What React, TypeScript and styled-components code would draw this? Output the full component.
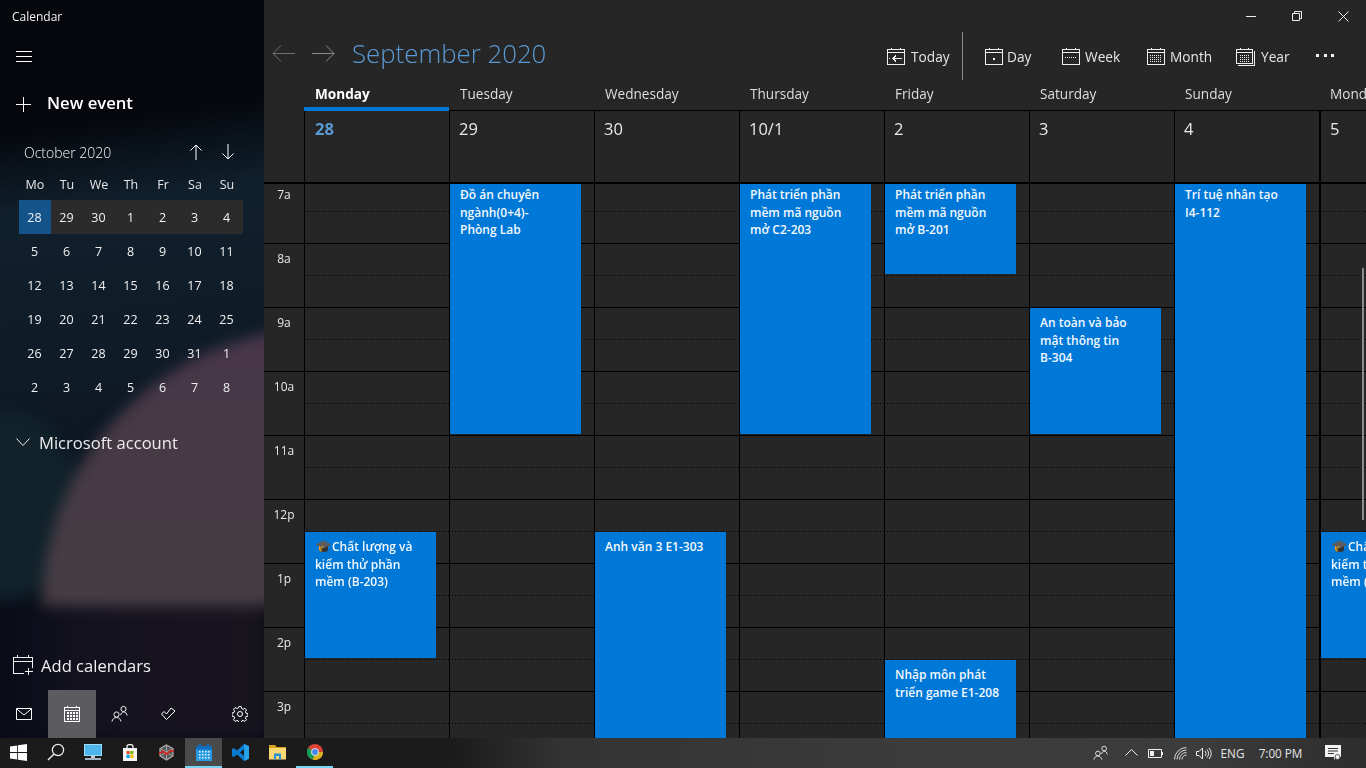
import React from "react";
import styled, { createGlobalStyle } from "styled-components";

const GlobalStyle = createGlobalStyle`
  html, body {
    margin: 0;
    padding: 0;
    background: #262626;
  }
  body {
    font-family: "Open Sans", "Noto Sans", sans-serif;
    overflow: hidden;
  }
`;

const Screen = styled.div`
  width: 1366px;
  height: 768px;
  display: flex;
  flex-direction: column;
  overflow: hidden;
  color: #fff;
`;

const AppWindow = styled.div`
  display: flex;
  height: 738px;
`;

/* ---------- sidebar ---------- */

const Sidebar = styled.aside`
  position: relative;
  width: 264px;
  flex-shrink: 0;
  display: flex;
  flex-direction: column;
  overflow: hidden;
  background: linear-gradient(172deg, #05070c 0, #05070c 130px, #10202c 215px, #0f1b27 380px, #0b1420 500px, #090c16 640px);
`;

const Wallpaper = styled.div`
  position: absolute;
  inset: 0;
  filter: blur(7px);
`;

const TealGlow = styled.div`
  position: absolute;
  left: -70px;
  top: 410px;
  width: 150px;
  height: 190px;
  border-radius: 50%;
  background: #11222a;
`;

const BlobClip = styled.div`
  position: absolute;
  left: 0;
  top: 0;
  width: 284px;
  height: 606px;
  overflow: hidden;
`;

const PinkBlob = styled.div`
  position: absolute;
  left: 42px;
  top: 328px;
  width: 560px;
  height: 560px;
  border-radius: 50%;
  background: linear-gradient(180deg, #48364a 0, #463a44 120px, #463d44 280px);
`;

const FooterShade = styled.div`
  position: absolute;
  left: 0;
  right: 0;
  top: 606px;
  bottom: 0;
  background: linear-gradient(90deg, #090c18 0, #14121f 90px, #19151f 264px);
`;

const SideContent = styled.div`
  position: relative;
  display: flex;
  flex-direction: column;
  height: 100%;
`;

const AppTitle = styled.div`
  height: 32px;
  padding-left: 12px;
  font-size: 12px;
  line-height: 33px;
  color: #f2f2f2;
`;

const Hamburger = styled.div`
  height: 48px;
  padding-left: 16px;
  display: flex;
  align-items: center;
`;

const NewEvent = styled.div`
  height: 48px;
  padding-left: 16px;
  display: flex;
  align-items: center;
  gap: 16px;
  font-size: 16.7px;
  line-height: 20px;
  font-weight: 600;
`;

const NewEventLabel = styled.span`
  margin-top: -2px;
`;

const MonthHeader = styled.div`
  display: flex;
  align-items: center;
  height: 48px;
  padding-left: 24px;
  font-size: 14px;
  font-weight: 300;
  color: #f2f2f2;
`;

const MonthArrows = styled.div`
  margin-left: auto;
  margin-right: 29px;
  display: flex;
  gap: 18px;
`;

const MiniGrid = styled.div`
  display: grid;
  grid-template-columns: repeat(7, 32px);
  margin-left: 19px;
`;

const MiniHead = styled.div`
  height: 24px;
  line-height: 17px;
  text-align: center;
  font-size: 12.5px;
  color: #e6e6e6;
`;

const MiniDay = styled.div<{ $today?: boolean; $week?: boolean }>`
  height: 34px;
  box-sizing: border-box;
  padding-right: 1px;
  line-height: 36px;
  text-align: center;
  font-size: 12.5px;
  color: #f0f0f0;
  background: ${(p) => (p.$today ? "#14548a" : p.$week ? "#2b2b2b" : "transparent")};
`;

const Account = styled.div`
  margin-top: 16px;
  height: 44px;
  padding-left: 16px;
  display: flex;
  align-items: center;
  gap: 9px;
  font-size: 16.6px;
  color: #ececec;
`;

const AddCalendars = styled.div`
  margin-top: auto;
  margin-bottom: 1px;
  height: 48px;
  padding-left: 13px;
  display: flex;
  align-items: center;
  gap: 8px;
  font-size: 16.6px;
  color: #f0f0f0;
`;

const NavRow = styled.div`
  height: 48px;
  display: flex;
`;

const NavButton = styled.div<{ $active?: boolean; $push?: boolean }>`
  width: 48px;
  height: 48px;
  display: flex;
  align-items: center;
  justify-content: center;
  background: ${(p) => (p.$active ? "#5b5b60" : "transparent")};
  margin-left: ${(p) => (p.$push ? "auto" : "0")};
`;

/* ---------- main ---------- */

const Main = styled.main`
  position: relative;
  flex: 1;
  min-width: 0;
  background: #262626;
  display: flex;
  flex-direction: column;
  overflow: hidden;
`;

const TitleBar = styled.div`
  height: 32px;
  display: flex;
  justify-content: flex-end;
`;

const WinButton = styled.div`
  width: 46px;
  height: 32px;
  display: flex;
  align-items: center;
  justify-content: center;
`;

const Toolbar = styled.div`
  height: 48px;
  display: flex;
  align-items: center;
  padding-left: 8px;
  padding-right: 32px;
`;

const NavArrow = styled.div`
  width: 39px;
  display: flex;
  align-items: center;
  margin-top: -6px;
`;

const MonthTitle = styled.div`
  margin-left: 2px;
  margin-top: -6px;
  font-size: 25.8px;
  font-weight: 300;
  color: #5b9bd5;
  white-space: nowrap;
`;

const ToolGroup = styled.div`
  margin-left: auto;
  display: flex;
  align-items: center;
  height: 48px;
`;

const ToolButton = styled.div<{ $w: number; $gap: number }>`
  width: ${(p) => p.$w}px;
  display: flex;
  align-items: center;
  gap: ${(p) => p.$gap}px;
  font-size: 13.7px;
  color: #e6e6e6;
`;

const ToolDivider = styled.div`
  width: 1px;
  height: 48px;
  background: #8c8c8c;
  margin-right: 22px;
`;

const More = styled.div`
  width: 18px;
  display: flex;
  justify-content: space-between;
  margin-top: -2px;
`;

const MoreDot = styled.span`
  width: 3px;
  height: 3px;
  background: #f0f0f0;
`;

const DayHeadRow = styled.div`
  height: 31px;
  display: flex;
  padding-left: 40px;
`;

const DayHead = styled.div<{ $active?: boolean }>`
  width: 145px;
  flex-shrink: 0;
  padding-left: 11px;
  box-sizing: border-box;
  font-size: 13.6px;
  line-height: 27px;
  white-space: nowrap;
  font-weight: ${(p) => (p.$active ? 700 : 400)};
  color: ${(p) => (p.$active ? "#fff" : "#dedede")};
  box-shadow: inset 0 ${(p) => (p.$active ? "-4px 0 #0078d7" : "-1px 0 #000")};
`;

const DateRow = styled.div`
  height: 73px;
  box-sizing: border-box;
  display: flex;
  padding-left: 40px;
  border-bottom: 2px solid #000;
`;

const DateCell = styled.div<{ $today?: boolean; $boundary?: boolean }>`
  width: 145px;
  flex-shrink: 0;
  box-sizing: border-box;
  border-left: ${(p) => (p.$boundary ? 2 : 1)}px solid #000;
  padding-left: ${(p) => (p.$today ? 10 : 9)}px;
  font-size: 16.5px;
  line-height: 35px;
  font-weight: ${(p) => (p.$today ? 700 : 400)};
  color: ${(p) => (p.$today ? "#5b9bd5" : "#e8e8e8")};
`;

const GridViewport = styled.div`
  flex: 1;
  min-height: 0;
  overflow: hidden;
`;

const GridBody = styled.div`
  display: flex;
  margin-top: -4px;
`;

const Gutter = styled.div`
  width: 40px;
  flex-shrink: 0;
`;

const HourLabel = styled.div`
  height: 64px;
  box-sizing: border-box;
  border-bottom: 1px solid #000;
  text-align: center;
  font-size: 12px;
  line-height: 30px;
  color: #e8e8e8;
`;

const DayColumn = styled.div<{ $boundary?: boolean }>`
  position: relative;
  width: 145px;
  flex-shrink: 0;
  box-sizing: border-box;
  border-left: ${(p) => (p.$boundary ? 2 : 1)}px solid #000;
`;

const HourCell = styled.div`
  height: 64px;
  box-sizing: border-box;
  border-bottom: 1px solid #000;
`;

const HalfHour = styled.div`
  height: 32px;
  box-sizing: border-box;
  background-image: linear-gradient(to right, #000 1px, transparent 1px);
  background-size: 3px 1px;
  background-position: 2px bottom;
  background-repeat: repeat-x;
`;

const EventCard = styled.div<{ $top: number; $height: number }>`
  position: absolute;
  left: 0;
  top: ${(p) => p.$top}px;
  width: 131px;
  height: ${(p) => p.$height}px;
  box-sizing: border-box;
  padding: 6px 0 0 10px;
  background: #0078d7;
  font-size: 12px;
  font-weight: 600;
  line-height: 17.5px;
  color: #f4f9fd;
`;

const EventLine = styled.div`
  white-space: nowrap;
`;

const ScrollThumb = styled.div`
  position: absolute;
  right: 2px;
  top: 268px;
  width: 2px;
  height: 252px;
  background: #8a8a8a;
`;

/* ---------- taskbar ---------- */

const Taskbar = styled.footer`
  height: 30px;
  display: flex;
  align-items: stretch;
  background: linear-gradient(90deg, #1b1b1b 0, #1b1b1b 450px, #333 560px, #3b3b3b 900px, #3c3c3c 1200px, #2d2d2d 1366px);
`;

const TaskSlot = styled.div<{ $active?: boolean; $running?: boolean }>`
  width: 37px;
  box-sizing: border-box;
  display: flex;
  align-items: center;
  justify-content: center;
  background: ${(p) => (p.$active ? "#4a4a4a" : "transparent")};
  border-bottom: 2px solid ${(p) => (p.$active || p.$running ? "#76d6f5" : "transparent")};
`;

const Tray = styled.div`
  margin-left: auto;
  display: flex;
  align-items: center;
`;

const TrayIcon = styled.div<{ $w: number }>`
  width: ${(p) => p.$w}px;
  display: flex;
  justify-content: center;
`;

const TrayText = styled.div<{ $w: number }>`
  width: ${(p) => p.$w}px;
  text-align: center;
  font-size: 11.7px;
  color: #e6e6e6;
  white-space: nowrap;
`;

/* ---------- icons ---------- */

type IconProps = { size?: number; color?: string };

const Line = ({ d, w = 16, h = 16, color = "#fff" }: { d: string; w?: number; h?: number; color?: string }) => (
  <svg width={w} height={h} viewBox={`0 0 ${w} ${h}`} fill="none" stroke={color} strokeWidth="1">
    <path d={d} />
  </svg>
);

const CalFrame = ({ children, color = "#f0f0f0" }: { children?: React.ReactNode; color?: string }) => (
  <svg width="18" height="18" viewBox="0 0 18 18" fill="none" stroke={color} strokeWidth="1" shapeRendering="crispEdges">
    <path d="M0.5 2.5h17v15h-17zM0.5 5.5h17M4.5 0.5v2M13.5 0.5v2" />
    {children}
  </svg>
);

const DotGrid = ({ x, y, cols, rows, color = "#f0f0f0" }: { x: number; y: number; cols: number; rows: number; color?: string }) => (
  <g fill={color} stroke="none">
    {Array.from({ length: rows * cols }).map((_, i) => (
      <rect key={i} x={x + (i % cols) * 2} y={y + Math.floor(i / cols) * 2} width="1.4" height="1.4" />
    ))}
  </g>
);

const CapEmoji = () => (
  <svg width="17" height="13" viewBox="0 0 17 13" style={{ verticalAlign: "-2px" }}>
    <path d="M4 6v4.500c2.500 2 6.500 2 9 0V6z" fill="#333" />
    <path d="M0.500 4.500L8.500 0.500l8 4-8 4z" fill="#5c5c5c" />
    <path d="M4.500 6v4l1.500 1V7.500l2.500-1" fill="none" stroke="#e09a25" strokeWidth="1.2" />
  </svg>
);

const People = ({ size = 18 }: IconProps) => (
  <svg width={size} height={size} viewBox="0 0 18 18" fill="none" stroke="#f0f0f0" strokeWidth="1">
    <circle cx="12.5" cy="4" r="2.6" />
    <path d="M9.600 10.200c.5-2 1.600-3.200 2.900-3.200 2 0 3.200 1.400 3.600 3.600" />
    <circle cx="5.5" cy="9.5" r="2.6" />
    <path d="M1 16.500c.4-2.400 2-4 4.500-4s4 1.600 4.500 4" />
  </svg>
);

const WindowsLogo = () => (
  <svg width="17" height="17" viewBox="0 0 17 17" fill="#fff">
    <path d="M0 2.400L7.200 1.400V8H0zM8 1.300L17 0V8H8zM0 9H7.200V15.600L0 14.600zM8 9H17V17L8 15.700z" />
  </svg>
);

const SearchIcon = () => (
  <svg width="18" height="18" viewBox="0 0 18 18" fill="none" stroke="#eee" strokeWidth="1.2">
    <circle cx="11" cy="7" r="5.6" />
    <path d="M7 11L1 17" strokeWidth="1.5" />
  </svg>
);

const MonitorIcon = () => (
  <svg width="18" height="17" viewBox="0 0 18 17">
    <rect x="0.5" y="0.5" width="17" height="11" fill="#4fb6ec" stroke="#9adcf8" strokeWidth="1" />
    <rect x="7" y="12" width="4" height="2" fill="#c9c9c9" />
    <rect x="1" y="14" width="16" height="2" fill="#9fb4c0" />
  </svg>
);

const StoreIcon = () => (
  <svg width="16" height="17" viewBox="0 0 16 17">
    <path d="M5 4V2.500C5 1 6 .5 8 .5S11 1 11 2.500V4" fill="none" stroke="#f0f0f0" strokeWidth="1.3" />
    <rect x="1" y="4" width="14" height="13" fill="#f5f5f5" />
    <rect x="4.5" y="7" width="3.2" height="3.2" fill="#f25022" />
    <rect x="8.3" y="7" width="3.2" height="3.2" fill="#7fba00" />
    <rect x="4.5" y="10.8" width="3.2" height="3.2" fill="#00a4ef" />
    <rect x="8.3" y="10.8" width="3.2" height="3.2" fill="#ffb900" />
  </svg>
);

const WebIcon = () => (
  <svg width="17" height="17" viewBox="0 0 17 17" fill="none">
    <path d="M8.500 1L15 4.500V12L8.500 16L2 12V4.500z" fill="#5a5a5a" stroke="#b0b0b0" strokeWidth="1.2" />
    <path d="M8.500 1V16M2 4.500L15 12M15 4.500L2 12" stroke="#a0a0a0" strokeWidth="1" />
    <path d="M1 9.500L5 7.500L9 10L12 7L16 7" stroke="#e01b1b" strokeWidth="1.6" />
  </svg>
);

const CalendarApp = () => (
  <svg width="16" height="17" viewBox="0 0 16 17">
    <rect x="0" y="2" width="16" height="15" fill="#2a9be3" />
    <rect x="0" y="2" width="16" height="3.5" fill="#0f6cbd" />
    <rect x="3" y="0" width="2" height="4" fill="#0f6cbd" />
    <rect x="11" y="0" width="2" height="4" fill="#0f6cbd" />
    <g fill="#e8f5fd">
      {[7, 10, 13].map((y) =>
        [3, 6, 9, 12].map((x) => <rect key={`${x}-${y}`} x={x} y={y} width="1.5" height="1.5" />)
      )}
    </g>
  </svg>
);

const VsCode = () => (
  <svg width="17" height="17" viewBox="0 0 17 17">
    <path d="M12.200 0L17 2.300V14.700L12.200 17L5 10.400L1.800 13L0 12V5L1.800 4L5 6.600zM12.300 5L8 8.500L12.300 12z" fill="#0b7ad1" fillRule="evenodd" />
    <path d="M12.200 0L17 2.300V14.700L12.200 17z" fill="#27a2ec" />
  </svg>
);

const FolderIcon = () => (
  <svg width="17" height="16" viewBox="0 0 17 16">
    <path d="M0 1h6l1.500 2H17v2H0z" fill="#d9a21b" />
    <rect x="0" y="4" width="17" height="11.5" fill="#f8d775" />
    <path d="M5 15.500V9.500h7v6H10V12H7v3.500z" fill="#2a8fd8" />
  </svg>
);

const ChromeIcon = () => (
  <svg width="16" height="16" viewBox="0 0 16 16">
    <circle cx="8" cy="8" r="8" fill="#db4437" />
    <path d="M8 8L1 4A8 8 0 0 0 6 15.800z" fill="#0f9d58" />
    <path d="M8 8h8A8 8 0 0 1 6 15.800z" fill="#d8b21f" />
    <circle cx="8" cy="8" r="3.8" fill="#eee" />
    <circle cx="8" cy="8" r="2.9" fill="#4285f4" />
  </svg>
);

const Notification = () => (
  <svg width="17" height="16" viewBox="0 0 17 16">
    <path d="M0 0H16V12H11L9 15V12H0z" fill="#f2f2f2" />
    <path d="M3 3.500H13M3 6H13M3 8.500H9" stroke="#333" strokeWidth="1" />
    <circle cx="12.5" cy="12" r="2.5" fill="#f2f2f2" stroke="#333" strokeWidth=".8" />
  </svg>
);

/* ---------- data ---------- */

const miniHeads = ["Mo", "Tu", "We", "Th", "Fr", "Sa", "Su"];
const miniDays = [
  28, 29, 30, 1, 2, 3, 4, 5, 6, 7, 8, 9, 10, 11, 12, 13, 14, 15, 16, 17, 18, 19, 20, 21, 22, 23, 24, 25, 26, 27, 28,
  29, 30, 31, 1, 2, 3, 4, 5, 6, 7, 8,
];

const hours = ["7a", "8a", "9a", "10a", "11a", "12p", "1p", "2p", "3p"];

type CalendarEvent = { top: number; height: number; lines: string[]; cap?: boolean };

type Day = { name: string; date: string; events: CalendarEvent[] };

const quality: CalendarEvent = {
  top: 352,
  height: 126,
  cap: true,
  lines: ["Chất lượng và", "kiểm thử phần", "mềm (B-203)"],
};

const days: Day[] = [
  { name: "Monday", date: "28", events: [quality] },
  { name: "Tuesday", date: "29", events: [{ top: 0, height: 254, lines: ["Đồ án chuyên", "ngành(0+4)-", "Phòng Lab"] }] },
  { name: "Wednesday", date: "30", events: [{ top: 352, height: 300, lines: ["Anh văn 3 E1-303"] }] },
  { name: "Thursday", date: "10/1", events: [{ top: 0, height: 254, lines: ["Phát triển phần", "mềm mã nguồn", "mở C2-203"] }] },
  {
    name: "Friday",
    date: "2",
    events: [
      { top: 0, height: 94, lines: ["Phát triển phần", "mềm mã nguồn", "mở B-201"] },
      { top: 480, height: 200, lines: ["Nhập môn phát", "triển game E1-208"] },
    ],
  },
  { name: "Saturday", date: "3", events: [{ top: 128, height: 126, lines: ["An toàn và bảo", "mật thông tin", "B-304"] }] },
  { name: "Sunday", date: "4", events: [{ top: 0, height: 700, lines: ["Trí tuệ nhân tạo", "I4-112"] }] },
  { name: "Monday", date: "5", events: [quality] },
];

const App = () => {
  return (
    <Screen>
      <GlobalStyle />
      <AppWindow>
        <Sidebar>
          <Wallpaper>
            <TealGlow />
            <BlobClip>
              <PinkBlob />
            </BlobClip>
            <FooterShade />
          </Wallpaper>
          <SideContent>
            <AppTitle>Calendar</AppTitle>
            <Hamburger>
              <Line d="M0 0.5h16M0 5.5h16M0 10.5h16" h={11} />
            </Hamburger>
            <NewEvent>
              <Line d="M7.5 0v15M0 7.5h15" w={15} h={15} />
              <NewEventLabel>New event</NewEventLabel>
            </NewEvent>
            <MonthHeader>
              October 2020
              <MonthArrows>
                <Line d="M7 16V1M1.5 6.5L7 1l5.5 5.5" w={14} h={16} />
                <Line d="M7 0v15M1.5 9.5L7 15l5.5-5.5" w={14} h={16} />
              </MonthArrows>
            </MonthHeader>
            <MiniGrid>
              {miniHeads.map((h) => (
                <MiniHead key={h}>{h}</MiniHead>
              ))}
              {miniDays.map((d, i) => (
                <MiniDay key={i} $today={i === 0} $week={i < 7}>
                  {d}
                </MiniDay>
              ))}
            </MiniGrid>
            <Account>
              <Line d="M0.5 0.5L7 7.5l6.5-7" w={14} h={9} color="#eee" />
              Microsoft account
            </Account>
            <AddCalendars>
              <svg width="20" height="20" viewBox="0 0 20 20" fill="none" stroke="#f0f0f0" strokeWidth="1" shapeRendering="crispEdges">
                <path d="M11 18.5H0.5V2.5H19.5V13M0.5 6.5H19.5M4.5 0v3M15.5 0v3M15.5 13v7M12 16.5h8" />
              </svg>
              Add calendars
            </AddCalendars>
            <NavRow>
              <NavButton>
                <svg width="16" height="12" viewBox="0 0 16 12" fill="none" stroke="#fff" strokeWidth="1">
                  <path d="M0.5 0.5h15v11h-15zM0.5 0.8L8 7l7.5-6.2" />
                </svg>
              </NavButton>
              <NavButton $active>
                <svg width="16" height="16" viewBox="0 0 16 16" fill="none" stroke="#fff" strokeWidth="1" shapeRendering="crispEdges">
                  <path d="M0.5 1.5h15v14h-15zM0.5 4.5h15M3.5 0v2M12.5 0v2" />
                  <g fill="#fff" stroke="none">
                    {[6, 9, 12].map((y) =>
                      [3, 6, 9, 12].map((x) => <rect key={`${x}-${y}`} x={x} y={y} width="2" height="2" />)
                    )}
                  </g>
                </svg>
              </NavButton>
              <NavButton>
                <People />
              </NavButton>
              <NavButton>
                <svg width="15" height="14" viewBox="0 0 15 14" fill="none" stroke="#fff" strokeWidth="1">
                  <path d="M0.5 7L3 4.5L5.5 7L10 1L14 4L5.5 12.5z" />
                </svg>
              </NavButton>
              <NavButton $push>
                <svg width="16" height="16" viewBox="0 0 16 16" fill="none" stroke="#fff" strokeWidth="1">
                  <circle cx="8" cy="8" r="2.5" />
                  <path d="M6.800.6h2.400l.4 2 1.500.7 1.800-1 1.600 1.700-1.100 1.700.6 1.500 2 .5v2.400l-2 .4-.6 1.500 1.100 1.700-1.600 1.700-1.800-1-1.500.6-.4 2H6.800l-.4-2-1.500-.6-1.800 1-1.600-1.700 1.100-1.700-.6-1.500-2-.4V7l2-.5.6-1.500-1.100-1.700 1.600-1.700 1.800 1 1.500-.7z" />
                </svg>
              </NavButton>
            </NavRow>
          </SideContent>
        </Sidebar>
        <Main>
          <TitleBar>
            <WinButton>
              <Line d="M0 5.5h10" w={10} h={10} color="#eee" />
            </WinButton>
            <WinButton>
              <Line d="M0.5 2.5h7v7h-7zM2.5 2.5v-2h7v7h-2" w={10} h={10} color="#eee" />
            </WinButton>
            <WinButton>
              <svg width="11" height="11" viewBox="0 0 11 11" fill="none" stroke="#eee" strokeWidth="1">
                <path d="M0.5 0.5l10 10M10.5 0.5l-10 10" />
              </svg>
            </WinButton>
          </TitleBar>
          <Toolbar>
            <NavArrow>
              <Line d="M23 8.5H1M9 0.5L1 8.5l8 8" w={24} h={17} color="#6e6e6e" />
            </NavArrow>
            <NavArrow>
              <Line d="M1 8.5h22M15 0.5l8 8-8 8" w={24} h={17} color="#8a8a8a" />
            </NavArrow>
            <MonthTitle>September 2020</MonthTitle>
            <ToolGroup>
              <ToolButton $w={75} $gap={6}>
                <CalFrame>
                  <path d="M15 11.5H6M9 8.5l-3 3 3 3M2.5 11v1" />
                </CalFrame>
                Today
              </ToolButton>
              <ToolDivider />
              <ToolButton $w={77} $gap={4}>
                <CalFrame>
                  <rect x="8" y="10.5" width="2" height="2" fill="#f0f0f0" stroke="none" />
                </CalFrame>
                Day
              </ToolButton>
              <ToolButton $w={85} $gap={5}>
                <CalFrame>
                  <DotGrid x={3} y={10} cols={6} rows={1} />
                </CalFrame>
                Week
              </ToolButton>
              <ToolButton $w={89} $gap={5}>
                <CalFrame>
                  <DotGrid x={3} y={8} cols={6} rows={4} />
                </CalFrame>
                Month
              </ToolButton>
              <ToolButton $w={80} $gap={6}>
                <svg width="19" height="19" viewBox="0 0 19 19" fill="none" stroke="#f0f0f0" strokeWidth="1" shapeRendering="crispEdges">
                  <path d="M0.5 2.5h16v14h-16zM0.5 5.5h16M4.5 0.5v2M12.5 0.5v2M18.5 4v14.5H2" />
                  <DotGrid x={4} y={8} cols={5} rows={4} />
                </svg>
                Year
              </ToolButton>
              <More>
                <MoreDot />
                <MoreDot />
                <MoreDot />
              </More>
            </ToolGroup>
          </Toolbar>
          <DayHeadRow>
            {days.map((day, i) => (
              <DayHead key={i} $active={i === 0}>
                {day.name}
              </DayHead>
            ))}
          </DayHeadRow>
          <DateRow>
            {days.map((day, i) => (
              <DateCell key={i} $today={i === 0} $boundary={i === 7}>
                {day.date}
              </DateCell>
            ))}
          </DateRow>
          <GridViewport>
            <GridBody>
              <Gutter>
                {hours.map((h) => (
                  <HourLabel key={h}>{h}</HourLabel>
                ))}
              </Gutter>
              {days.map((day, i) => (
                <DayColumn key={i} $boundary={i === 7}>
                  {hours.map((h) => (
                    <HourCell key={h}>
                      <HalfHour />
                    </HourCell>
                  ))}
                  {day.events.map((ev, j) => (
                    <EventCard key={j} $top={ev.top} $height={ev.height}>
                      {ev.lines.map((line, k) => (
                        <EventLine key={k}>
                          {ev.cap && k === 0 && <CapEmoji />}
                          {line}
                        </EventLine>
                      ))}
                    </EventCard>
                  ))}
                </DayColumn>
              ))}
            </GridBody>
          </GridViewport>
          <ScrollThumb />
        </Main>
      </AppWindow>
      <Taskbar>
        <TaskSlot>
          <WindowsLogo />
        </TaskSlot>
        <TaskSlot>
          <SearchIcon />
        </TaskSlot>
        <TaskSlot>
          <MonitorIcon />
        </TaskSlot>
        <TaskSlot>
          <StoreIcon />
        </TaskSlot>
        <TaskSlot>
          <WebIcon />
        </TaskSlot>
        <TaskSlot $active>
          <CalendarApp />
        </TaskSlot>
        <TaskSlot>
          <VsCode />
        </TaskSlot>
        <TaskSlot>
          <FolderIcon />
        </TaskSlot>
        <TaskSlot $running>
          <ChromeIcon />
        </TaskSlot>
        <Tray>
          <TrayIcon $w={30}>
            <People size={16} />
          </TrayIcon>
          <TrayIcon $w={30}>
            <Line d="M0.5 6.5L6.5 0.5l6 6" w={13} h={8} color="#eee" />
          </TrayIcon>
          <TrayIcon $w={19}>
            <svg width="16" height="9" viewBox="0 0 16 9" fill="none" stroke="#eee" strokeWidth="1">
              <path d="M0.5 0.5h13v8h-13zM14.5 3v3" />
              <rect x="2" y="2" width="4" height="5" fill="#eee" stroke="none" />
            </svg>
          </TrayIcon>
          <TrayIcon $w={30}>
            <svg width="13" height="13" viewBox="0 0 13 13" fill="none" stroke="#d8d8d8" strokeWidth="1">
              <path d="M0.5 12.5a12 12 0 0 1 12-12M3 12.5a9.500 9.500 0 0 1 9.500-9.500M5.500 12.500a7 7 0 0 1 7-7M8 12.500a4.500 4.500 0 0 1 4.500-4.500" />
            </svg>
          </TrayIcon>
          <TrayIcon $w={17}>
            <svg width="16" height="13" viewBox="0 0 16 13" fill="none" stroke="#eee" strokeWidth="1">
              <path d="M0.5 4.5H3L6.5 1v11L3 8.5H0.5zM9 4a3.500 3.500 0 0 1 0 5M11 2.500a6 6 0 0 1 0 8M13 1a8 8 0 0 1 0 11" />
            </svg>
          </TrayIcon>
          <TrayText $w={41}>ENG</TrayText>
          <TrayText $w={55}>7:00 PM</TrayText>
          <TrayIcon $w={50}>
            <Notification />
          </TrayIcon>
          <TrayIcon $w={8} />
        </Tray>
      </Taskbar>
    </Screen>
  );
};

export default App;
